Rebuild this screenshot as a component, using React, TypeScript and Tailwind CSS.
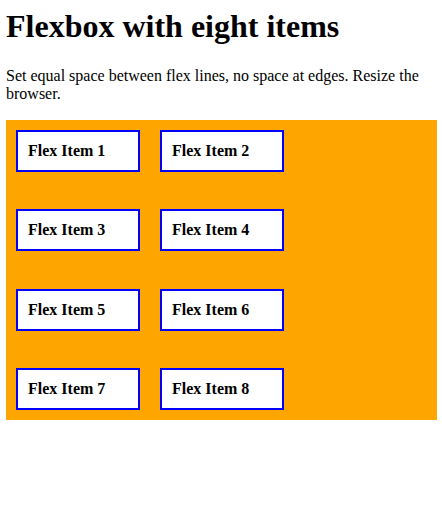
import React from 'react';

const items = [1, 2, 3, 4, 5, 6, 7, 8];

export default function App() {
  return (
    <div className="min-h-[517px] bg-white pl-[6px] pr-[5px] pt-[8px] font-['Liberation_Serif','Times_New_Roman',serif] text-black">
      <h1 className="mb-[22px] text-[32px] font-bold leading-[37px]">Flexbox with eight items</h1>
      <p className="mb-[17px] text-[16px] leading-[18px]">
        Set equal space between flex lines, no space at edges. Resize the browser.
      </p>
      <div className="flex h-[300px] w-[431px] flex-wrap content-between bg-[#ffa500]">
        {items.map((n) => (
          <div
            key={n}
            className="m-[10px] w-[124px] border-2 border-[#0000ff] bg-white p-[10px] text-[16px] font-bold leading-[18px]"
          >
            Flex Item {n}
          </div>
        ))}
      </div>
    </div>
  );
}
